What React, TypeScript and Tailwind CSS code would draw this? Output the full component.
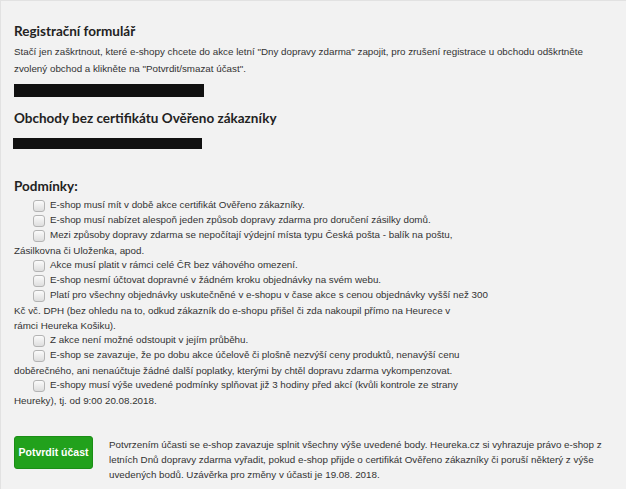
import React from 'react';

// podmínky akce, řádky zalomené ručně podle originálu
const conditions: string[][] = [
  ['E-shop musí mít v době akce certifikát Ověřeno zákazníky.'],
  ['E-shop musí nabízet alespoň jeden způsob dopravy zdarma pro doručení zásilky domů.'],
  [
    'Mezi způsoby dopravy zdarma se nepočítají výdejní místa typu Česká pošta - balík na poštu,',
    'Zásilkovna či Uloženka, apod.',
  ],
  ['Akce musí platit v rámci celé ČR bez váhového omezení.'],
  ['E-shop nesmí účtovat dopravné v žádném kroku objednávky na svém webu.'],
  [
    'Platí pro všechny objednávky uskutečněné v e-shopu v čase akce s cenou objednávky vyšší než 300',
    'Kč vč. DPH (bez ohledu na to, odkud zákazník do e-shopu přišel či zda nakoupil přímo na Heurece v',
    'rámci Heureka Košiku).',
  ],
  ['Z akce není možné odstoupit v jejím průběhu.'],
  [
    'E-shop se zavazuje, že po dobu akce účelově či plošně nezvýší ceny produktů, nenavýší cenu',
    'doběrečného, ani nenaúčtuje žádné další poplatky, kterými by chtěl dopravu zdarma vykompenzovat.',
  ],
  [
    'E-shopy musí výše uvedené podmínky splňovat již 3 hodiny před akcí (kvůli kontrole ze strany',
    'Heureky), tj. od 9:00 20.08.2018.',
  ],
];

const Checkbox: React.FC = () => (
  <span className="w-[12px] h-[12px] ml-[19px] mr-[5px] shrink-0 rounded-[3px] border border-[#b4b4b4] bg-gradient-to-b from-[#fbfbfb] to-[#dedede]" />
);

const App: React.FC = () => {
  return (
    <div className="w-[626px] h-[489px] bg-[#f2f2f2] border-t border-l border-[#e2e2e2] overflow-hidden">
      <div className="pl-[13px] pt-[21px] text-[#333] font-['Liberation_Sans',Arial,sans-serif] text-[9.8px]">
        <h2 className="font-['Lato',sans-serif] font-bold text-[13.5px] leading-[18px] text-[#222]">
          Registrační formulář
        </h2>
        <p className="mt-[3px] leading-[17px] whitespace-nowrap">
          Stačí jen zaškrtnout, které e-shopy chcete do akce letní "Dny dopravy zdarma" zapojit, pro zrušení
          registrace u obchodu odškrtněte
          <br />
          zvolený obchod a klikněte na "Potvrdit/smazat účast".
        </p>

        {/* začerněné údaje */}
        <div className="mt-[7px] w-[190px] h-[13px] bg-[#111]" />

        <h2 className="mt-[12px] font-['Lato',sans-serif] font-bold text-[13.5px] leading-[18px] text-[#222]">
          Obchody bez certifikátu Ověřeno zákazníky
        </h2>
        <div className="mt-[11px] -ml-px w-[189px] h-[11px] bg-[#111]" />

        <h3 className="mt-[28px] font-['Lato',sans-serif] font-bold text-[13.5px] leading-[18px] text-[#222]">
          Podmínky:
        </h3>

        <div className="mt-[3px] whitespace-nowrap">
          {conditions.map((lines, i) => (
            <div key={i}>
              {lines.map((line, j) =>
                j === 0 ? (
                  <div key={j} className="flex items-center h-[15px]">
                    <Checkbox />
                    <span>{line}</span>
                  </div>
                ) : (
                  <div key={j} className="h-[15px] leading-[15px]">
                    {line}
                  </div>
                )
              )}
            </div>
          ))}
        </div>

        <div className="mt-[28px] flex items-start gap-[16px]">
          <button className="w-[79px] h-[33px] shrink-0 rounded-[3px] border border-[#1b8e16] bg-[#22a11c] text-white font-bold text-[10.5px]">
            Potvrdit účast
          </button>
          <p className="pt-[1px] leading-[15px] whitespace-nowrap">
            Potvrzením účasti se e-shop zavazuje splnit všechny výše uvedené body. Heureka.cz si vyhrazuje právo e-shop z
            <br />
            letních Dnů dopravy zdarma vyřadit, pokud e-shop přijde o certifikát Ověřeno zákazníky či poruší některý z výše
            <br />
            uvedených bodů. Uzávěrka pro změny v účasti je 19.08. 2018.
          </p>
        </div>
      </div>
    </div>
  );
};

export default App;
